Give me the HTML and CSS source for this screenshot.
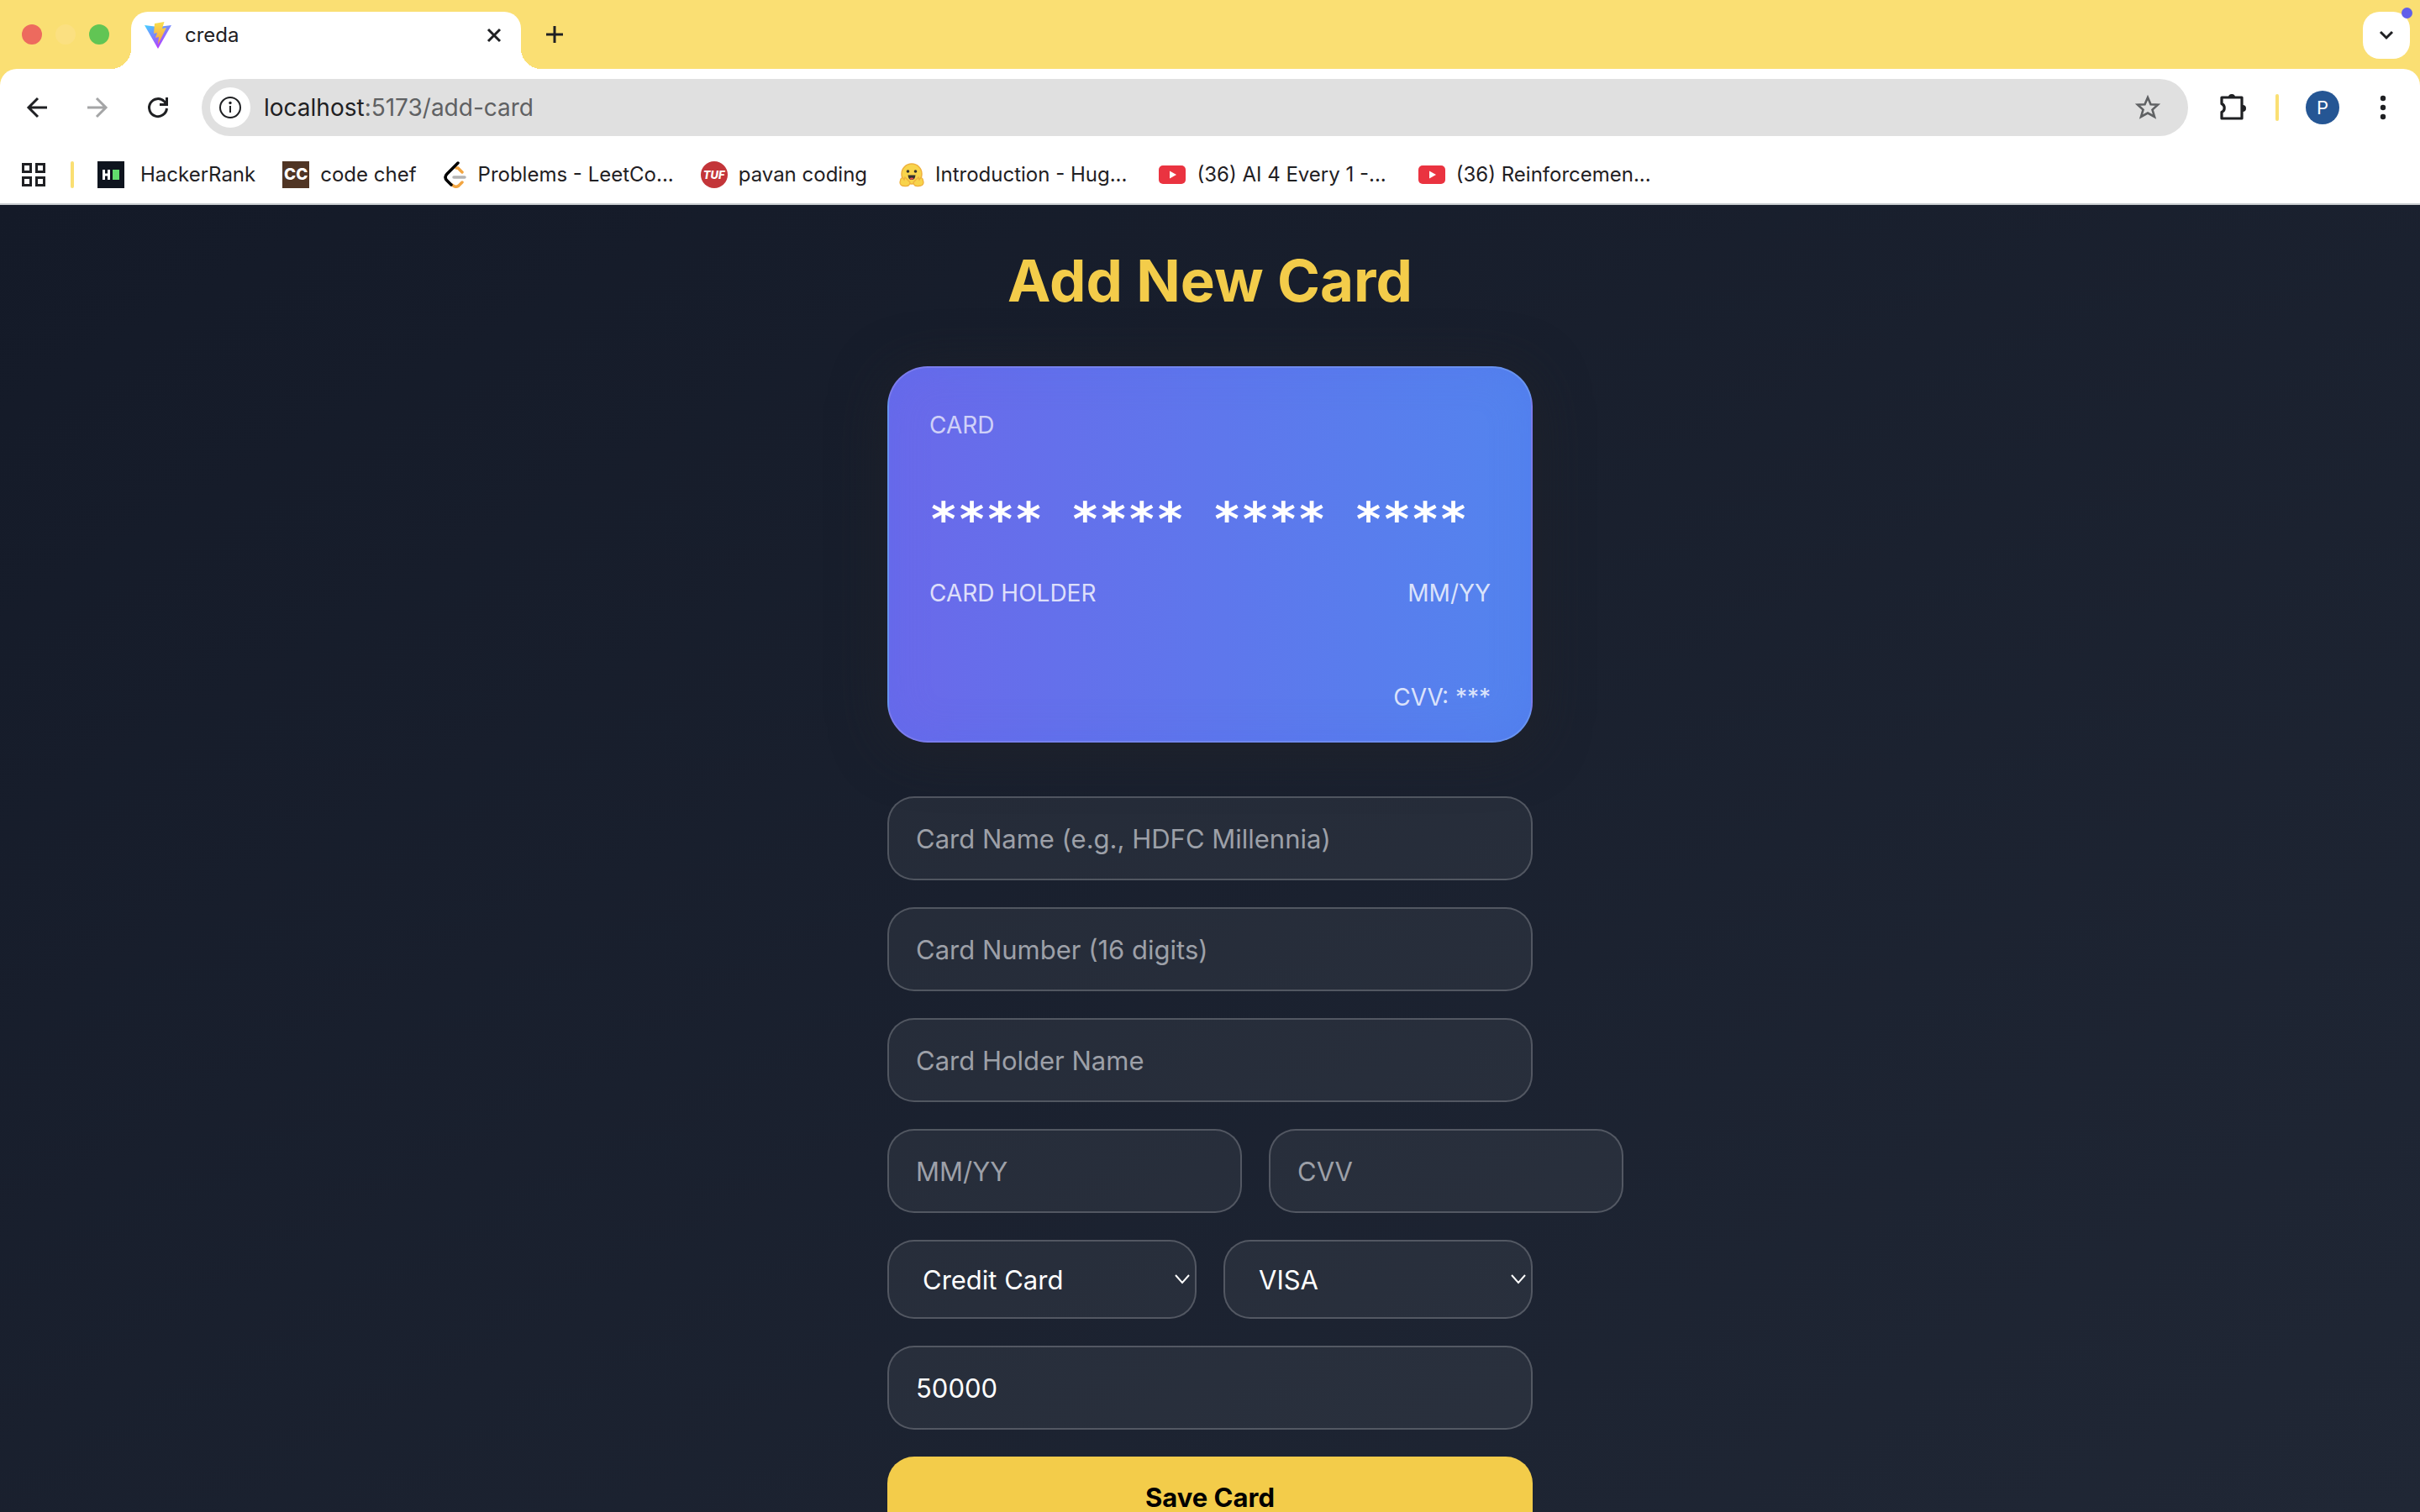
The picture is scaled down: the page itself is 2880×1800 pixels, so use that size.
FILE: index.html
```html
<!DOCTYPE html>
<html lang="en">
<head>
<meta charset="utf-8">
<title>creda</title>
<link rel="stylesheet" href="styles.css">
</head>
<body>
<header class="chrome">
  <div class="tabstrip">
    <div class="lights"><span class="light close"></span><span class="light min"></span><span class="light max"></span></div>
    <div class="tab">
      <svg class="favicon" viewBox="0 0 32 32" aria-hidden="true">
        <defs>
          <linearGradient id="vg" x1="0" y1="0" x2="0.6" y2="1"><stop offset="0" stop-color="#41d1ff"/><stop offset="1" stop-color="#bd34fe"/></linearGradient>
          <linearGradient id="vy" x1="0" y1="0" x2="0" y2="1"><stop offset="0" stop-color="#f9e04f"/><stop offset="1" stop-color="#f5a040"/></linearGradient>
        </defs>
        <path d="M0 4L16 6L32 4L16 32Z" fill="url(#vg)"/>
        <path d="M12 2L23.500 0L21 8L26 7L16 27L17 18L13 19L15 13L11 14Z" fill="url(#vy)"/>
      </svg>
      <span class="tab-title">creda</span>
      <button class="plain" type="button" aria-label="Close tab"><svg width="20" height="20" viewBox="0 0 20 20"><path d="M3 3L17 17M17 3L3 17" class="stroke"/></svg></button>
    </div>
    <button class="plain newtab" type="button" aria-label="New tab"><svg width="22" height="22" viewBox="0 0 22 22"><path d="M11 1V21M1 11H21" class="stroke"/></svg></button>
    <button class="tabsearch" type="button" aria-label="Search tabs"><svg width="20" height="14" viewBox="0 0 20 14"><path d="M3 3L10 10L17 3" class="stroke"/></svg><span class="dot"></span></button>
  </div>
  <div class="toolbar">
    <button class="plain nav" type="button" aria-label="Back"><svg width="28" height="28" viewBox="0 0 28 28"><path d="M26 14H4M15 3L4 14L15 25" class="stroke"/></svg></button>
    <button class="plain nav faded" type="button" aria-label="Forward"><svg width="28" height="28" viewBox="0 0 28 28"><path d="M2 14H24M13 3L24 14L13 25" class="stroke"/></svg></button>
    <button class="plain nav" type="button" aria-label="Reload"><svg width="28" height="28" viewBox="0 0 28 28"><path d="M24.500 15A10.500 10.500 0 1 1 21.500 6.700L24 10M24.500 2V10.500H16" class="stroke"/></svg></button>
    <div class="omnibox">
      <span class="site"><svg width="28" height="28" viewBox="0 0 28 28"><circle cx="14" cy="14" r="12" class="stroke thin"/><path d="M14 12V20" class="stroke thin"/><circle cx="14" cy="8.500" r="1.700" fill="#1f2023"/></svg></span>
      <span class="url"><span class="host">localhost</span>:5173/add-card</span>
      <button class="plain star" type="button" aria-label="Bookmark this page"><svg width="32" height="32" viewBox="0 0 32 32"><path d="M16 4L19.500 12.200L28 12.600L21.500 18.600L24 27L16 22.600L8 27L10.500 18.600L4 12.600L12.500 12.200Z" fill="none" stroke="#5f6163" stroke-width="2.600"/></svg></button>
    </div>
    <button class="plain puzzle" type="button" aria-label="Extensions"><svg width="36" height="36" viewBox="0 0 36 36"><path d="M4 6H28V31H4V23.500A5.500 5.500 0 0 0 4 13.500Z" fill="none" stroke="#1f2023" stroke-width="3.200" stroke-linejoin="round"/><path d="M12 6A4 4 0 0 1 20 6ZM29 15A4 4 0 0 1 29 23Z" fill="#1f2023"/></svg></button>
    <span class="sep"></span>
    <button class="avatar" type="button">P</button>
    <button class="plain more" type="button" aria-label="Menu"><svg width="8" height="30" viewBox="0 0 8 30"><g fill="#1f2023"><circle cx="4" cy="4" r="3.200"/><circle cx="4" cy="15" r="3.200"/><circle cx="4" cy="26" r="3.200"/></g></svg></button>
  </div>
  <nav class="bookmarks">
    <button class="plain" type="button" aria-label="Apps"><svg width="30" height="30" viewBox="0 0 30 30"><path d="M2.500 2.500H11.500V11.500H2.500ZM18.500 2.500H27.500V11.500H18.500ZM2.500 18.500H11.500V27.500H2.500ZM18.500 18.500H27.500V27.500H18.500Z" fill="none" stroke="#1f2023" stroke-width="3"/></svg></button>
    <span class="sep"></span>
    <a class="bm hr" href="#"><svg width="32" height="32" viewBox="0 0 32 32"><path d="M0 0H32V32H0Z" fill="#0e141e"/><path d="M7.500 10V22M13.500 10V22M7.500 16H13.500" stroke="#fff" stroke-width="3"/><path d="M18 10H26V22H18Z" fill="#62de6d"/></svg>HackerRank</a>
    <a class="bm" href="#"><span class="cc">CC</span>code chef</a>
    <a class="bm" href="#"><svg width="28" height="32" viewBox="0 0 28 32"><path d="M15 8L17 8L22 13M22 25L18 29Q14 32 10 28" fill="none" stroke="#f2a541" stroke-width="3.500" stroke-linecap="round"/><path d="M17 2L4 15Q0 19 4 23L9 28" fill="none" stroke="#000" stroke-width="3.500" stroke-linecap="round"/><path d="M12 19H25" stroke="#b3b3b3" stroke-width="3.500" stroke-linecap="round"/></svg>Problems - LeetCo...</a>
    <a class="bm" href="#"><span class="tuf">TUF</span>pavan coding</a>
    <a class="bm wide hf" href="#"><svg width="30" height="30" viewBox="0 0 30 30"><circle cx="15" cy="14" r="12" fill="#f8d44c" stroke="#efb13d" stroke-width="1.500"/><circle cx="10.500" cy="11" r="1.800" fill="#33312e"/><circle cx="19.500" cy="11" r="1.800" fill="#33312e"/><path d="M10.500 15.500H19.500Q19 21 15 21Q11 21 10.500 15.500Z" fill="#33312e"/><path d="M12.500 19.500Q15 17.500 17.500 19.500Q15 22 12.500 19.500" fill="#ef4e4e"/><path d="M2 20Q4 17 6 21L7 18L13 24Q13 29 7 28.500Q1 28.500 1 24ZM28 20Q26 17 24 21L23 18L17 24Q17 29 23 28.500Q29 28.500 29 24Z" fill="#f8d44c" stroke="#efb13d" stroke-width="1.300"/></svg>Introduction - Hug...</a>
    <a class="bm wide" href="#"><svg width="32" height="22" viewBox="0 0 32 22"><rect width="32" height="22" rx="5" fill="#ea3340"/><path d="M13 6.500L21 11L13 15.500Z" fill="#fff"/></svg>(36) AI 4 Every 1 -...</a>
    <a class="bm" href="#"><svg width="32" height="22" viewBox="0 0 32 22"><rect width="32" height="22" rx="5" fill="#ea3340"/><path d="M13 6.500L21 11L13 15.500Z" fill="#fff"/></svg>(36) Reinforcemen...</a>
  </nav>
</header>
<main class="page">
  <h1 class="title">Add New Card</h1>
  <section class="card" aria-label="Card preview">
    <div class="kind">CARD</div>
    <div class="number">**** **** **** ****</div>
    <div class="row"><span>CARD HOLDER</span><span>MM/YY</span></div>
    <div class="cvv">CVV: ***</div>
  </section>
  <form class="form">
    <input class="field" type="text" aria-label="Card name" placeholder="Card Name (e.g., HDFC Millennia)">
    <input class="field" type="text" aria-label="Card number" placeholder="Card Number (16 digits)">
    <input class="field" type="text" aria-label="Card holder name" placeholder="Card Holder Name">
    <div class="pair">
      <input class="field short" type="text" aria-label="Expiry date" placeholder="MM/YY">
      <input class="field short" type="text" aria-label="CVV" placeholder="CVV">
    </div>
    <div class="pair">
      <div class="pick"><select class="field" aria-label="Card type"><option>Credit Card</option><option>Debit Card</option></select><svg class="chev" width="18" height="12" viewBox="0 0 18 12"><path d="M1 1L9 10L17 1"/></svg></div>
      <div class="pick"><select class="field" aria-label="Network"><option>VISA</option><option>Mastercard</option></select><svg class="chev" width="18" height="12" viewBox="0 0 18 12"><path d="M1 1L9 10L17 1"/></svg></div>
    </div>
    <input class="field" type="text" aria-label="Credit limit" value="50000">
    <button class="save" type="submit">Save Card</button>
  </form>
</main>
</body>
</html>
```
FILE: styles.css
```css
* { box-sizing: border-box; }
body {
  margin: 0;
  height: 100vh;
  display: flex;
  flex-direction: column;
  overflow: hidden;
  font-family: Inter, "Liberation Sans", sans-serif;
  color: #1f2023;
}
svg { display: block; flex: none; }
button, input, select { font-family: inherit; }
.plain { border: 0; padding: 0; background: none; }
.stroke { fill: none; stroke: #1f2023; stroke-width: 3; }
.thin { stroke-width: 2; }

/* Browser chrome */
.chrome { flex: none; background: #fadf73; border-bottom: 2px solid #c9cdd0; }
.tabstrip { display: flex; align-items: center; height: 82px; padding: 14px 12px 0 26px; }
.lights { display: flex; gap: 16px; width: 130px; padding-bottom: 14px; }
.light { width: 24px; height: 24px; border-radius: 50%; }
.close { background: #ed6a5e; }
.min { background: #fbe081; }
.max { background: #61c554; }
.tab {
  position: relative;
  display: flex;
  align-items: center;
  gap: 16px;
  width: 464px;
  height: 68px;
  padding: 0 22px 12px 16px;
  border-radius: 20px 20px 0 0;
  background: #fff;
}
.tab::before, .tab::after {
  content: "";
  position: absolute;
  bottom: 0;
  width: 24px;
  height: 24px;
}
.tab::before { left: -24px; background: radial-gradient(circle at 0 0, transparent 24px, #fff 24px); }
.tab::after { right: -24px; background: radial-gradient(circle at 100% 0, transparent 24px, #fff 24px); }
.favicon { width: 32px; height: 32px; }
.tab-title { flex: 1; font-size: 24px; line-height: 32px; }
.newtab { margin-left: 29px; padding-bottom: 14px; }
.tabsearch {
  position: relative;
  display: grid;
  place-items: center;
  width: 56px;
  height: 56px;
  margin: 0 0 12px auto;
  border: 0;
  border-radius: 20px;
  background: #fff;
}
.dot { position: absolute; top: -5px; right: -3px; width: 13px; height: 13px; border-radius: 50%; background: #615fea; }
.toolbar {
  display: flex;
  align-items: center;
  height: 92px;
  padding: 0 40px 0 30px;
  border-radius: 20px 20px 0 0;
  background: #fff;
}
.nav { margin-right: 44px; }
.faded { opacity: 0.4; }
.omnibox {
  flex: 1;
  display: flex;
  align-items: center;
  height: 68px;
  margin-left: -6px;
  padding: 0 32px 0 10px;
  border-radius: 34px;
  background: #e0e0e0;
}
.site { display: grid; place-items: center; width: 48px; height: 48px; border-radius: 50%; background: #fff; }
.url { flex: 1; margin-left: 16px; font-size: 28px; line-height: 36px; color: #5f6163; }
.host { color: #1f2023; }
.puzzle { margin-left: 36px; }
.sep { width: 4px; height: 32px; border-radius: 2px; background: #fadf73; }
.toolbar .sep { margin-left: 32px; }
.avatar { width: 40px; height: 40px; margin-left: 32px; padding: 0; border: 0; border-radius: 50%; background: #255694; color: #fff; font-size: 22px; line-height: 40px; }
.more { margin-left: 48px; }
.bookmarks { display: flex; align-items: center; height: 68px; padding: 0 25px; background: #fff; }
.bookmarks .sep { margin: 0 28px 0 29px; }
.bm { display: flex; align-items: center; gap: 13px; margin-right: 32px; color: #1f2023; text-decoration: none; font-size: 24px; line-height: 32px; white-space: nowrap; }
.hr { gap: 19px; }
.hf { margin-left: 6px; }
.wide { margin-right: 38px; }
.cc { width: 32px; height: 32px; background: #503524; color: #fff; font-size: 19px; font-weight: 800; line-height: 32px; text-align: center; }
.tuf { width: 32px; height: 32px; border-radius: 50%; background: #c33539; color: #fff; font-size: 13px; font-weight: 800; font-style: italic; line-height: 32px; text-align: center; }

/* Application page */
.page {
  flex: 1;
  min-height: 0;
  overflow: hidden;
  display: flex;
  flex-direction: column;
  align-items: center;
  padding: 48px 32px;
  background: linear-gradient(150deg, #141a28, #202735);
}
.title { flex: none; margin: 0 0 60px; font-size: 69px; line-height: 84px; font-weight: 700; color: #f3cc4a; }
.card {
  flex: none;
  width: 768px;
  max-width: 100%;
  min-height: 448px;
  padding: 48px 48px 32px;
  border: 2px solid rgba(255, 255, 255, 0.12);
  border-radius: 48px;
  background: linear-gradient(90deg, #6a69ea, #5384ee);
  box-shadow: 0 8px 64px rgba(34, 36, 42, 0.7), inset 0 0 48px rgba(80, 110, 240, 0.3);
  color: rgba(255, 255, 255, 0.8);
  font-size: 28px;
  line-height: 40px;
}
.kind { color: rgba(255, 255, 255, 0.7); }
.number { margin: 56px 0 32px; font-family: "DejaVu Sans Mono", monospace; font-size: 56px; font-weight: 700; line-height: 72px; color: #fff; }
.row { display: flex; justify-content: space-between; }
.cvv { margin-top: 84px; text-align: right; }
.form { flex: none; display: flex; flex-direction: column; gap: 32px; width: 768px; max-width: 100%; margin-top: 64px; }
.field {
  width: 100%;
  height: 100px;
  padding: 0 32px;
  border: 2px solid rgba(255, 255, 255, 0.2);
  border-radius: 32px;
  background: rgba(255, 250, 255, 0.055);
  color: #fff;
  font-size: 31px;
}
.field::placeholder { color: #9da0a8; opacity: 1; }
.pair { display: flex; gap: 32px; }
.short { flex: none; width: 422px; }
.pick { flex: 1; position: relative; }
.pick .field { display: block; height: 94px; padding: 0 40px; appearance: none; }
.chev { position: absolute; right: 8px; top: 41px; fill: none; stroke: #fff; stroke-width: 2; pointer-events: none; }
.save { height: 96px; border: 0; border-radius: 32px; background: #f3cc4a; color: #000; font-size: 31px; font-weight: 700; }
```
